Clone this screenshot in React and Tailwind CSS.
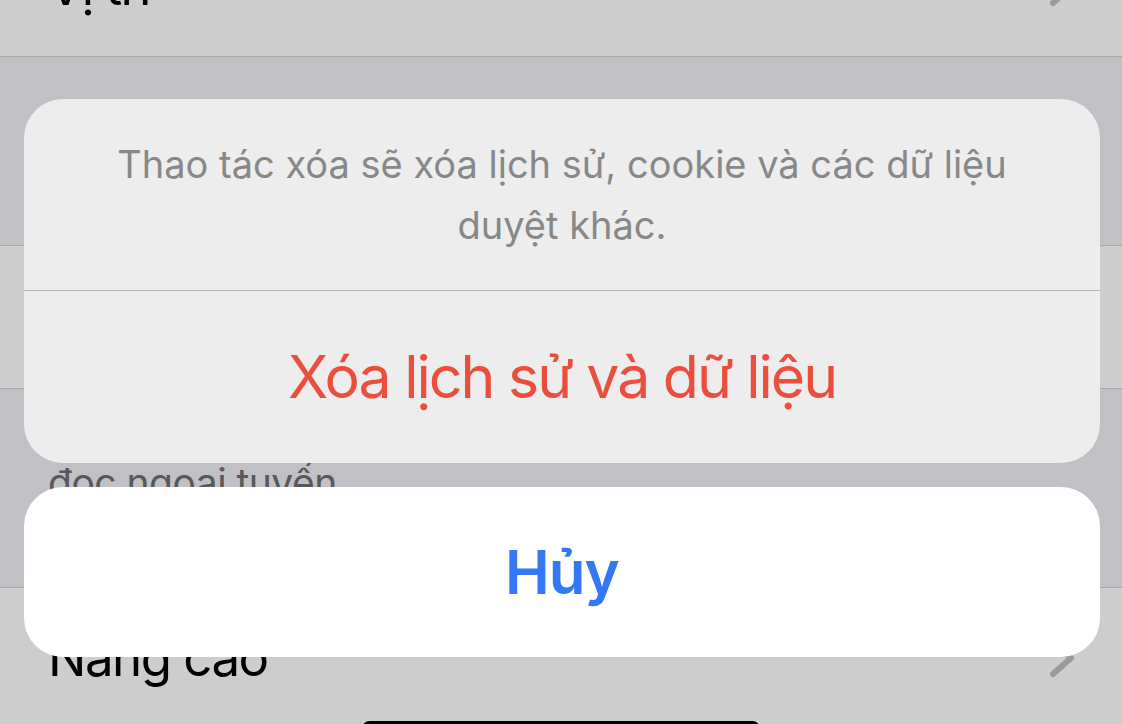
import React from "react";

function Chevron() {
  return (
    <svg width="28" height="40" viewBox="0 0 28 40" className="shrink-0">
      <polyline
        points="5,4 23,20 5,36"
        fill="none"
        stroke="#9b9b9d"
        strokeWidth="6"
        strokeLinecap="round"
        strokeLinejoin="round"
      />
    </svg>
  );
}

export default function App() {
  return (
    <div
      className="relative h-[724px] w-[1122px] overflow-hidden bg-[#c1c0c5]"
      style={{ fontFamily: "Inter, 'Noto Sans', sans-serif" }}
    >
      {/* background settings list */}
      <div className="flex flex-col">
        <div className="mt-[-82px] flex h-[138px] items-center justify-between bg-[#cdcdcd] pl-[48px] pr-[46px]">
          <span className="text-[51px] tracking-[-1.5px] text-black">Vị trí</span>
          <Chevron />
        </div>
        <div className="h-px bg-[#a9a9ab]" />
        <div className="h-[188px]" />
        <div className="h-px bg-[#a9a9ab]" />
        <div className="h-[142px] bg-[#cdcdcd]" />
        <div className="h-px bg-[#a9a9ab]" />
        <div className="h-[198px] pl-[48px] pt-[71px]">
          <span className="text-[39px] leading-[46px] tracking-[-0.5px] text-[#58585b]">đọc ngoại tuyến</span>
        </div>
        <div className="h-px bg-[#a9a9ab]" />
        <div className="flex h-[140px] items-center justify-between bg-[#cdcdcd] pl-[48px] pr-[46px]">
          <span className="text-[51px] tracking-[-1.5px] text-black">Nâng cao</span>
          <Chevron />
        </div>
      </div>

      {/* action sheet */}
      <div className="absolute inset-0 flex flex-col gap-[24px] pl-[24px] pr-[22px] pt-[99px]">
        <div className="flex h-[364px] flex-col overflow-hidden rounded-[39px] bg-[#ededee]">
          <div className="flex h-[191px] items-center justify-center text-center text-[38px] leading-[61px] text-[#888889]">
            <p>
              Thao tác xóa sẽ xóa lịch sử, cookie và các dữ liệu
              <br />
              duyệt khác.
            </p>
          </div>
          <div className="h-px bg-[#b4b4b5]" />
          <div className="flex flex-1 items-center justify-center text-[59px] tracking-[-2px] text-[#eb4e3d]">
            Xóa lịch sử và dữ liệu
          </div>
        </div>
        <div className="flex h-[170px] items-center justify-center rounded-[39px] bg-white text-[60px] font-semibold tracking-[-1px] text-[#3478f6]">
          Hủy
        </div>
      </div>

      {/* home indicator */}
      <div className="absolute left-1/2 top-[721px] h-[15px] w-[398px] -translate-x-1/2 rounded-full bg-black" />
    </div>
  );
}
